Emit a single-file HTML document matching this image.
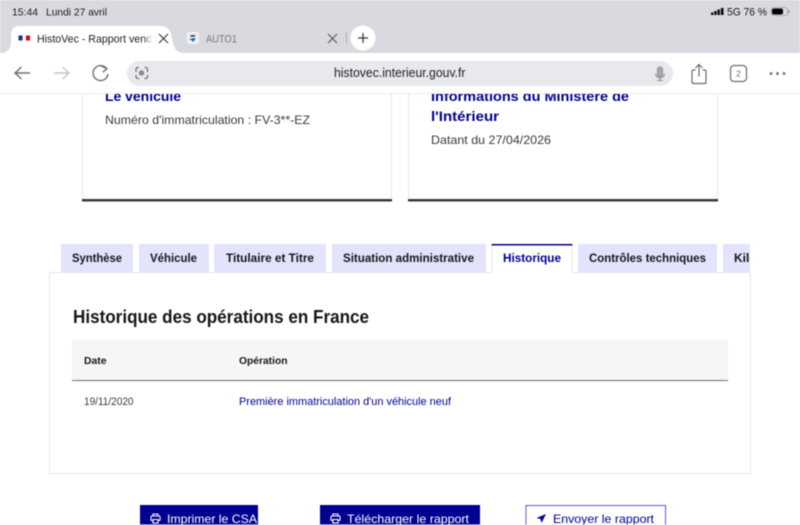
<!DOCTYPE html>
<html lang="fr">
<head>
<meta charset="utf-8">
<title>HistoVec</title>
<style>
html,body{margin:0;padding:0;background:#fff;width:800px;height:525px;overflow:hidden}
svg{display:block;position:absolute;left:0;top:0;filter:blur(.4px)}
text{font-family:"Liberation Sans","DejaVu Sans",sans-serif}
</style>
</head>
<body>
<svg width="800" height="525" viewBox="0 0 800 525" xmlns="http://www.w3.org/2000/svg">
<defs>
<linearGradient id="fade" x1="0" x2="1" y1="0" y2="0">
<stop offset="0" stop-color="#fff" stop-opacity="0"/>
<stop offset="1" stop-color="#fff"/>
</linearGradient>
</defs>
<rect width="800" height="525" fill="#fff"/>

<!-- page: cards -->
<rect x="82.500" y="90" width="309" height="111" fill="#fff" stroke="#e5e5e5"/>
<rect x="408.500" y="90" width="309" height="111" fill="#fff" stroke="#e5e5e5"/>
<rect x="82" y="199" width="310" height="2.500" fill="#3a3a3a"/>
<rect x="408" y="199" width="310" height="2.500" fill="#3a3a3a"/>
<text x="105" y="101" font-size="14" font-weight="700" fill="#000091" textLength="76" lengthAdjust="spacingAndGlyphs">Le véhicule</text>
<text x="105" y="124" font-size="12" fill="#3a3a3a" textLength="205" lengthAdjust="spacingAndGlyphs">Numéro d'immatriculation : FV-3**-EZ</text>
<text x="431" y="101" font-size="14" font-weight="700" fill="#000091" textLength="198" lengthAdjust="spacingAndGlyphs">Informations du Ministère de</text>
<text x="431" y="121" font-size="14" font-weight="700" fill="#000091" textLength="68" lengthAdjust="spacingAndGlyphs">l'Intérieur</text>
<text x="431" y="144" font-size="12" fill="#3a3a3a" textLength="120" lengthAdjust="spacingAndGlyphs">Datant du 27/04/2026</text>

<!-- panel -->
<rect x="49.500" y="272.500" width="701" height="201" fill="#fff" stroke="#e5e5e5"/>

<!-- tabs -->
<g fill="#e3e3fd">
<rect x="61" y="244" width="72" height="28"/>
<rect x="139" y="244" width="70" height="28"/>
<rect x="214" y="244" width="112" height="28"/>
<rect x="332" y="244" width="154" height="28"/>
<rect x="578" y="244" width="139" height="28"/>
<rect x="723" y="244" width="27" height="28"/>
</g>
<rect x="492" y="244" width="80" height="30" fill="#fff"/>
<rect x="491.500" y="245" width="1" height="28" fill="#e8e8e8"/>
<rect x="571.500" y="245" width="1" height="28" fill="#e8e8e8"/>
<rect x="491.500" y="244" width="81" height="1.500" fill="#000091"/>
<g font-size="12" font-weight="700" fill="#161616">
<text x="72" y="262" textLength="50" lengthAdjust="spacingAndGlyphs">Synthèse</text>
<text x="150" y="262" textLength="47" lengthAdjust="spacingAndGlyphs">Véhicule</text>
<text x="226" y="262" textLength="88" lengthAdjust="spacingAndGlyphs">Titulaire et Titre</text>
<text x="343" y="262" textLength="131" lengthAdjust="spacingAndGlyphs">Situation administrative</text>
<text x="503" y="262" textLength="58" lengthAdjust="spacingAndGlyphs" fill="#000091">Historique</text>
<text x="589" y="262" textLength="117" lengthAdjust="spacingAndGlyphs">Contrôles techniques</text>
<text x="734" y="262">Kilo</text>
</g>
<rect x="750" y="240" width="30" height="32" fill="#fff"/>
<rect x="750" y="272" width="1" height="2" fill="#e5e5e5"/>

<!-- heading + table -->
<text x="73" y="323" font-size="18" font-weight="700" fill="#161616" textLength="296" lengthAdjust="spacingAndGlyphs">Historique des opérations en France</text>
<rect x="72" y="340" width="656" height="40" fill="#f6f6f6"/>
<rect x="72" y="380" width="656" height="1" fill="#6f6f6f"/>
<text x="84" y="364" font-size="10.500" font-weight="700" fill="#161616" textLength="22.500" lengthAdjust="spacingAndGlyphs">Date</text>
<text x="239" y="364" font-size="10.500" font-weight="700" fill="#161616" textLength="48.500" lengthAdjust="spacingAndGlyphs">Opération</text>
<text x="84" y="405" font-size="11" fill="#3a3a3a" textLength="49.500" lengthAdjust="spacingAndGlyphs">19/11/2020</text>
<text x="239" y="405" font-size="11" fill="#000091" textLength="212" lengthAdjust="spacingAndGlyphs">Première immatriculation d'un véhicule neuf</text>

<!-- bottom buttons -->
<rect x="140" y="505" width="118" height="20" fill="#000091"/>
<rect x="320" y="505" width="160" height="20" fill="#000091"/>
<rect x="526" y="505.500" width="139.500" height="20" fill="#fff" stroke="#5a5ad0"/>
<g fill="none" stroke="#fff" stroke-width="1.100">
<path d="M151 520.500v-3.500q0-1 1-1h7q1 0 1 1v3.500M153 516v-2h5v2M153 519.500h5v3.500h-5zM151 520.500h2M158 520.500h2"/>
<path d="M331 520.500v-3.500q0-1 1-1h7q1 0 1 1v3.500M333 516v-2h5v2M333 519.500h5v3.500h-5zM331 520.500h2M338 520.500h2"/>
</g>
<path d="M546 514l-9.500 4 4 1 1 4z" fill="#000091"/>
<g font-size="12">
<text x="167" y="523" fill="#fff" textLength="90" lengthAdjust="spacingAndGlyphs">Imprimer le CSA</text>
<text x="347" y="523" fill="#fff" textLength="122" lengthAdjust="spacingAndGlyphs">Télécharger le rapport</text>
<text x="553" y="523" fill="#000091" textLength="101" lengthAdjust="spacingAndGlyphs">Envoyer le rapport</text>
</g>
<rect x="0" y="524.300" width="800" height=".7" fill="#eeeeee" opacity=".7"/>

<!-- browser chrome -->
<rect x="0" y="0" width="800" height="54" fill="#d9dae0"/>
<rect x="0" y="53" width="800" height="40" fill="#fff"/>
<rect x="0" y="93" width="800" height="1" fill="#eceded"/>

<!-- status -->
<text x="12" y="15.500" font-size="10.500" fill="#1a1a1a" textLength="26" lengthAdjust="spacingAndGlyphs">15:44</text>
<text x="46" y="15.500" font-size="10.500" fill="#1a1a1a" textLength="61" lengthAdjust="spacingAndGlyphs">Lundi 27 avril</text>
<g fill="#111">
<rect x="711" y="12.500" width="2.500" height="2.500"/>
<rect x="714.200" y="11" width="2.500" height="4"/>
<rect x="717.400" y="9.500" width="2.500" height="5.500"/>
<rect x="720.800" y="8" width="2.800" height="7"/>
</g>
<text x="727" y="15.500" font-size="11" fill="#1a1a1a" textLength="40" lengthAdjust="spacingAndGlyphs">5G 76 %</text>
<rect x="771" y="7.500" width="17" height="8" rx="3" fill="none" stroke="#9a9a9e" stroke-width=".8"/>
<rect x="772" y="8.500" width="11" height="6" rx="2" fill="#000"/>
<rect x="788.500" y="10" width="1" height="3" fill="#9a9a9e"/>

<!-- active tab -->
<path d="M0 53q11 0 11-11v-7q0-9 9-9h140q9 0 11 8l2 9q2 10 11 10z" fill="#fff"/>
<rect x="18.500" y="35.500" width="4" height="5" fill="#2a2a8c"/>
<rect x="22.500" y="35.500" width="3" height="5" fill="#f5f5f5"/>
<rect x="26" y="35.500" width="4" height="5" fill="#e1000f"/>
<text x="37" y="42.500" font-size="11" fill="#1f1f1f" textLength="115" lengthAdjust="spacingAndGlyphs">HistoVec - Rapport vend</text>
<rect x="144" y="30" width="8" height="18" fill="url(#fade)"/>
<path d="M159 34l9 9M168 34l-9 9" stroke="#333" stroke-width="1.100" fill="none"/>

<!-- second tab -->
<rect x="187" y="32" width="12" height="12" rx="2" fill="#eef0f4"/>
<path d="M190 35h6l-2 2h-3zM189 39l7-1-3 4-1-1.500z" fill="#1f5c99"/>
<text x="206" y="42.500" font-size="11" fill="#77787c" textLength="31" lengthAdjust="spacingAndGlyphs">AUTO1</text>
<path d="M328 34l9 9M337 34l-9 9" stroke="#555" stroke-width="1.100" fill="none"/>
<rect x="346" y="32" width="1" height="12" fill="#aeaeb2"/>
<circle cx="363" cy="38" r="12.500" fill="#fff"/>
<path d="M363 33v10M358 38h10" stroke="#333" stroke-width="1.200" fill="none"/>

<!-- nav icons -->
<path d="M30 73H15M21.500 67l-6.500 6 6.500 6" stroke="#6e6f73" stroke-width="1.400" fill="none"/>
<path d="M69 73H54M62.500 67l6.500 6-6.500 6" stroke="#c4c5c9" stroke-width="1.400" fill="none"/>
<path d="M106.500 68.500a7.500 7.500 0 1 0 1.500 5.500" stroke="#6e6f73" stroke-width="1.400" fill="none"/>
<path d="M100.500 65.500l6.500 3.300-4.300 3.500" stroke="#6e6f73" stroke-width="1.300" fill="none"/>

<!-- url bar -->
<rect x="127" y="61" width="546" height="25" rx="12.500" fill="#e8e9ed"/>
<g stroke="#5f6064" stroke-width="1.100" fill="none">
<path d="M136 72v-2.500q0-2 2-2h1M144.500 67.500h1q2 0 2 2v2.500M136 75v1.500q0 2 2 2h1M144.500 78.500h1q2 0 2-2V75"/>
<circle cx="141.500" cy="73" r="2"/>
</g>
<circle cx="141.500" cy="73" r="1" fill="#5f6064"/>
<text x="334" y="77" font-size="12.500" fill="#202124" textLength="131.500" lengthAdjust="spacingAndGlyphs">histovec.interieur.gouv.fr</text>
<g stroke="#8a8b8f" stroke-width="1" fill="none">
<rect x="657.500" y="67" width="5" height="10" rx="2.500" fill="#a9aaae"/>
<path d="M655.500 73.500a4.500 4.500 0 0 0 9 0M660 78v2.500M657 80.500h6"/>
</g>

<!-- right icons -->
<g stroke="#6a6b6f" stroke-width="1.200" fill="none">
<path d="M695.500 70h-2q-1.500 0-1.500 1.500v10.500q0 1.500 1.500 1.500h11q1.500 0 1.500-1.500v-10.500q0-1.500-1.500-1.500h-2"/>
<path d="M699 76.500V65M695.500 68l3.500-3.500 3.500 3.500"/>
<rect x="730.500" y="65.500" width="16" height="16" rx="3.500"/>
</g>
<text x="738.500" y="76.500" font-size="8.500" fill="#6a6b6f" text-anchor="middle">2</text>
<g fill="#7a7b7f">
<circle cx="771" cy="73.500" r="1.500"/>
<circle cx="777.500" cy="73.500" r="1.500"/>
<circle cx="784" cy="73.500" r="1.500"/>
</g>
</svg>
</body>
</html>
